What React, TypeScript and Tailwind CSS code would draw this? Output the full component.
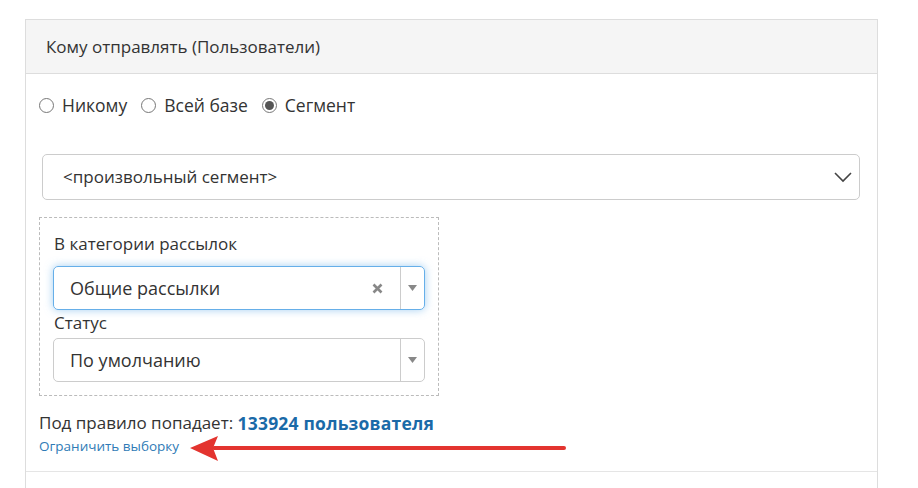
import React from 'react';

function Radio({ checked, label }: { checked?: boolean; label: string }) {
  return (
    <label className="flex items-center gap-[8px]">
      <span className="relative w-[15px] h-[15px] rounded-full border border-[#777] bg-white flex items-center justify-center">
        {checked && <span className="w-[9px] h-[9px] rounded-full bg-[#555]" />}
      </span>
      <span>{label}</span>
    </label>
  );
}

function Caret() {
  return (
    <svg width="9" height="6" viewBox="0 0 9 6">
      <path d="M0 0 L9 0 L4.5 6 Z" fill="#888" />
    </svg>
  );
}

export default function App() {
  return (
    <div
      className="relative w-[918px] h-[488px] overflow-hidden bg-white text-[#333]"
      style={{ fontFamily: '"Open Sans", "Noto Sans", sans-serif' }}
    >
      <div className="ml-[25px] mt-[19px] w-[853px] h-[470px] border-x border-t border-[#ddd]">
        <div className="h-[54px] bg-[#f5f5f5] border-b border-[#ddd] px-[20px] flex items-center text-[17px]">
          Кому отправлять (Пользователи)
        </div>

        <div className="pl-[13px] pt-[19px] pb-[16px] border-b border-[#e5e5e5]">
          <div className="flex items-center gap-[14px] h-[24px] text-[17.5px]">
            <Radio label="Никому" />
            <Radio label="Всей базе" />
            <Radio checked label="Сегмент" />
          </div>

          <div className="ml-[3px] mt-[37px] w-[818px] h-[46px] rounded-[5px] border border-[#ccc] flex items-center justify-between pl-[20px] pr-[6px] text-[17px]">
            <span>&lt;произвольный сегмент&gt;</span>
            <svg width="20" height="12" viewBox="0 0 20 12">
              <path d="M2 2 L10 10 L18 2" fill="none" stroke="#444" strokeWidth="1.6" />
            </svg>
          </div>

          <div className="mt-[17px] w-[400px] border border-dashed border-[#bbb] pl-[13px] pr-[13px] pt-[15px] pb-[13px]">
            <div className="h-[22px] flex items-center text-[17px] pl-[1px]">В категории рассылок</div>
            <div className="mt-[11px] h-[44px] rounded-[5px] border border-[#66afe9] shadow-[0_0_8px_rgba(102,175,233,0.6)] flex items-center text-[18px]">
              <span className="flex-1 pl-[16px]">Общие рассылки</span>
              <svg width="11" height="11" viewBox="0 0 11 11" className="mr-[17px]">
                <path d="M1.5 1.5 L9.5 9.5 M9.5 1.5 L1.5 9.5" stroke="#888" strokeWidth="2.6" />
              </svg>
              <span className="h-full w-[24px] border-l border-[#ccc] flex items-center justify-center">
                <Caret />
              </span>
            </div>
            <div className="mt-[2px] h-[22px] flex items-center text-[17px] pl-[1px]">Статус</div>
            <div className="mt-[4px] h-[44px] rounded-[5px] border border-[#ccc] flex items-center text-[18px]">
              <span className="flex-1 pl-[16px]">По умолчанию</span>
              <span className="h-full w-[24px] border-l border-[#ccc] flex items-center justify-center">
                <Caret />
              </span>
            </div>
          </div>

          <div className="mt-[15px] h-[24px] flex items-center text-[17px]">
            Под правило попадает:&nbsp;<span className="font-bold text-[17.5px] tracking-[0.2px] text-[#1a6aa8]">133924 пользователя</span>
          </div>
          <div className="mt-[2px] h-[18px] flex items-center text-[13.5px] text-[#2f7bb6]">Ограничить выборку</div>
        </div>
      </div>

      <svg className="absolute left-[188px] top-[435px]" width="380" height="28" viewBox="0 0 380 28">
        <path d="M2 13 L30 1 L25 13 L30 26 Z" fill="#e3342f" />
        <path d="M26 13 L376 13" stroke="#e3342f" strokeWidth="4" strokeLinecap="round" />
      </svg>
    </div>
  );
}
